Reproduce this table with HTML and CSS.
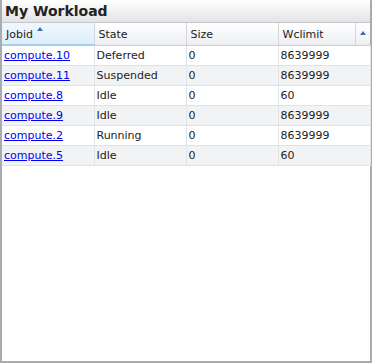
FILE: index.html
```html
<!DOCTYPE html>
<html lang="en">
<head>
  <meta charset="UTF-8">
  <title>My Workload</title>
  <link rel="stylesheet" href="styles.css">
</head>
<body>
  <div class="panel">
    <div class="panel-title">My Workload</div>
    <div class="panel-body">
      <table class="grid">
        <thead>
          <tr>
            <th class="col-jobid sorted">Jobid <span class="sort-up"></span></th>
            <th class="col-state">State</th>
            <th class="col-size">Size</th>
            <th class="col-wclimit">Wclimit</th>
            <th class="col-menu"><span class="sort-up"></span></th>
          </tr>
        </thead>
        <tbody>
          <tr><td><a href="#">compute.10</a></td><td>Deferred</td><td>0</td><td colspan="2">8639999</td></tr>
          <tr class="alt"><td><a href="#">compute.11</a></td><td>Suspended</td><td>0</td><td colspan="2">8639999</td></tr>
          <tr><td><a href="#">compute.8</a></td><td>Idle</td><td>0</td><td colspan="2">60</td></tr>
          <tr class="alt"><td><a href="#">compute.9</a></td><td>Idle</td><td>0</td><td colspan="2">8639999</td></tr>
          <tr><td><a href="#">compute.2</a></td><td>Running</td><td>0</td><td colspan="2">8639999</td></tr>
          <tr class="alt"><td><a href="#">compute.5</a></td><td>Idle</td><td>0</td><td colspan="2">60</td></tr>
        </tbody>
      </table>
    </div>
  </div>
</body>
</html>
```
FILE: styles.css
```css
body {
  margin: 0;
  font-family: "DejaVu Sans", Verdana, sans-serif;
  background: #fff;
}

.panel {
  width: 372px;
  height: 363px;
  box-sizing: border-box;
  border: 2px solid #a7abb2;
  border-top: none;
  display: flex;
  flex-direction: column;
}

.panel-title {
  height: 22px;
  line-height: 22px;
  padding-left: 3px;
  font-size: 14px;
  font-weight: bold;
  color: #222;
  background: linear-gradient(#ffffff, #e2e3e6);
  border-bottom: 1px solid #c4c6ca;
}

.panel-body {
  flex: 1;
  background: #fff;
  padding-bottom: 1px;
}

.grid {
  width: 368px;
  border-collapse: collapse;
  table-layout: fixed;
  font-size: 11px;
}

.grid th {
  box-sizing: border-box;
  height: 22px;
  padding: 1px 0 0 4px;
  text-align: left;
  font-weight: normal;
  color: #222;
  background: linear-gradient(#ffffff, #eceef1);
  border-right: 1px solid #d4d6da;
  border-bottom: 1px solid #c9ccd1;
}

.grid th.sorted {
  background: linear-gradient(#f0f8ff, #dcedfb);
  border-bottom: 2px solid #a9cdef;
}

.col-jobid, .col-state, .col-size { width: 92px; }
.col-wclimit { width: 77px; }
.col-menu { width: 15px; }

.grid th.col-menu {
  text-align: center;
  padding: 0;
  border-right: none;
}

.sort-up {
  display: inline-block;
  width: 0;
  height: 0;
  border-left: 3px solid transparent;
  border-right: 3px solid transparent;
  border-bottom: 4px solid #3d6fb0;
  vertical-align: 7px;
}

.col-menu .sort-up {
  vertical-align: 2px;
}

.grid td {
  height: 19px;
  padding: 0 0 0 2px;
  color: #222;
  border-right: 1px solid #e1e3e6;
  border-bottom: 1px solid #dfe1e4;
  white-space: nowrap;
}

.grid tr.alt td {
  background: #f2f3f5;
}

.grid a {
  color: #0000ee;
  text-decoration: underline;
}
```
